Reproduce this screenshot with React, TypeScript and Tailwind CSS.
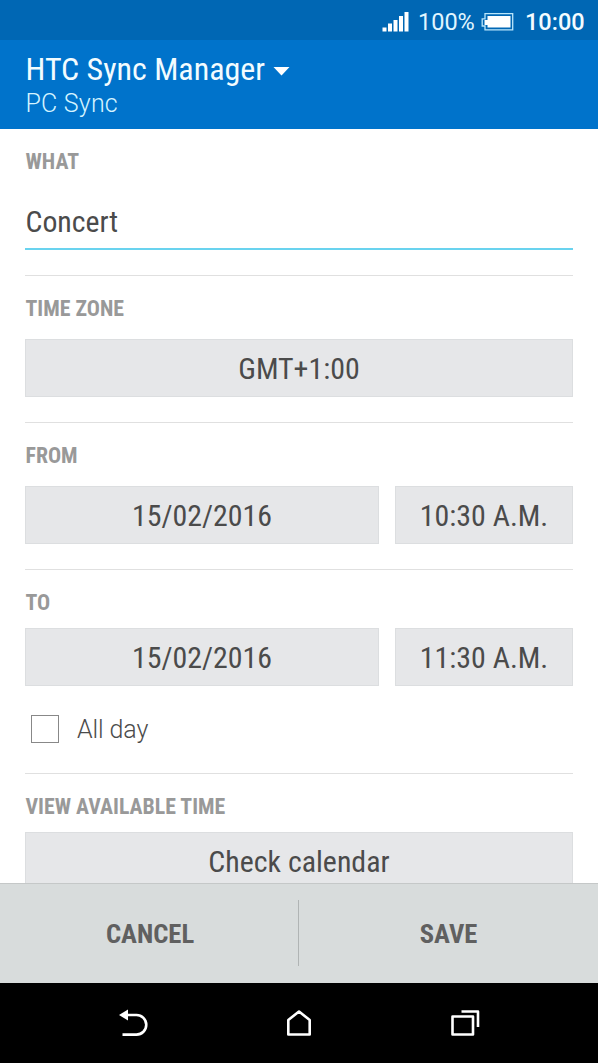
import type { ReactNode } from "react";

function Label({ children }: { children: ReactNode }) {
  return (
    <h2 className="h-6 pl-[0.5px] text-[21.8px] leading-6 font-bold whitespace-nowrap text-[#999999]">{children}</h2>
  );
}

function Field({ children, className = "" }: { children: ReactNode; className?: string }) {
  return (
    <button
      className={`flex h-[57.5px] items-center justify-center border border-[#dcdee0] bg-[#e6e7e9] pt-[2px] text-[29.9px] leading-9 whitespace-nowrap text-[#4b4b4b] ${className}`}
    >
      {children}
    </button>
  );
}

function DateTimeRow({ date, time }: { date: string; time: string }) {
  return (
    <div className="flex gap-4">
      <Field className="w-[354px]">{date}</Field>
      <Field className="flex-1">{time}</Field>
    </div>
  );
}

function StatusBar() {
  return (
    <div className="flex h-10 shrink-0 items-center bg-[#0067b4] pt-1 pl-[382px] text-white">
      <svg className="h-5 w-[27px] shrink-0" viewBox="0 0 27 20" fill="currentColor">
        <path d="M0.5 15.5h4v4h-4zM6 11.500h4v8h-4zM11.500 8h4v11.500h-4zM17 4h4v15.500h-4zM22.500 0h4v19.500h-4z" />
      </svg>
      <span className="ml-[9px] w-[63px] text-[23.5px] leading-8 font-normal whitespace-nowrap text-[#e0f6ff] [font-stretch:100%]">
        100%
      </span>
      <svg className="h-[19px] w-[33px] shrink-0" viewBox="0 0 33 19" fill="none">
        <path d="M4 0.700h27.700v16.100h-27.700v-3.800h-2.800v-7.200h2.800z" stroke="#b9e6fb" strokeWidth="1.300" />
        <path d="M6.500 3h23v11.500h-23v-2.500h-3v-5h3z" fill="white" />
      </svg>
      <span className="ml-[11px] text-[23.5px] leading-8 font-medium whitespace-nowrap text-[#f4fcff] [font-stretch:100%]">
        10:00
      </span>
    </div>
  );
}

function Header() {
  return (
    <header className="h-[89px] shrink-0 bg-[#0073cb] pt-[10px] pl-[25.5px] text-[#f2fcff]">
      <div className="flex h-[38px] items-center">
        <h1 className="text-[32px] leading-[38px] whitespace-nowrap">HTC Sync Manager</h1>
        <svg className="mt-1 ml-2 h-[9px] w-[17px]" viewBox="0 0 17 9" fill="white">
          <path d="M0.500 0h16l-8 8.500z" />
        </svg>
      </div>
      <p className="text-[25px] leading-[31px] font-light tracking-[0.2px] text-[#d5f3ff] [font-stretch:100%]">
        PC Sync
      </p>
    </header>
  );
}

export default function App() {
  return (
    <div className="flex h-[1063px] w-[598px] flex-col overflow-hidden bg-white font-['Roboto','Roboto_Condensed',sans-serif] [font-stretch:75%]">
      <StatusBar />
      <Header />
      <main className="min-h-0 flex-1 overflow-hidden pr-[25px] pl-[25px]">
        <section className="h-[147px] border-b border-[#e0e0e0] pt-[21px]">
          <Label>WHAT</Label>
          <div className="mt-[30px] h-[46px] border-b-2 border-[#69d3ef] pl-[0.5px] text-[29.8px] leading-9 text-[#4b4b4b]">
            Concert
          </div>
        </section>
        <section className="h-[147px] border-b border-[#e0e0e0] pt-[21px]">
          <Label>TIME ZONE</Label>
          <Field className="mt-[18px] w-full">GMT+1:00</Field>
        </section>
        <section className="h-[147px] border-b border-[#e0e0e0] pt-[21px]">
          <Label>FROM</Label>
          <div className="mt-[18px]">
            <DateTimeRow date="15/02/2016" time="10:30 A.M." />
          </div>
        </section>
        <section className="h-[204px] border-b border-[#e0e0e0] pt-[21px]">
          <Label>TO</Label>
          <div className="mt-[13px]">
            <DateTimeRow date="15/02/2016" time="11:30 A.M." />
          </div>
          <label className="mt-[29.5px] flex items-start pl-[6px]">
            <span className="h-7 w-7 border border-[#888888]" />
            <span className="ml-[18px] pt-[1px] text-[25px] leading-7 font-light tracking-[-0.1px] text-[#4b4b4b] [font-stretch:100%]">
              All day
            </span>
          </label>
        </section>
        <section className="pt-[21px]">
          <Label>VIEW AVAILABLE TIME</Label>
          <Field className="mt-[13px] w-full">Check calendar</Field>
        </section>
      </main>
      <footer className="flex h-[100px] shrink-0 items-center border-t border-[#c5c8c8] bg-[#d8dcdc] text-[26.6px] leading-8 font-bold text-[#606060]">
        <button className="h-full w-[298px] pt-px pl-[2px]">CANCEL</button>
        <div className="mb-px h-[66px] w-px bg-[#b0b4b4]" />
        <button className="h-full flex-1 pt-px">SAVE</button>
      </footer>
      <nav className="flex h-20 shrink-0 items-center bg-black">
        <svg className="h-20 w-full" viewBox="0 983 598 80" fill="none" stroke="white" strokeWidth="2.600">
          <path d="M127 1015h9.500a9.800 9.800 0 0 1 0 19.600h-14" />
          <path d="M119 1015l9-5.500v11z" fill="white" stroke="none" />
          <path d="M288.300 1034.500v-14.500l10.700-8.500 10.700 8.500v14.500z" strokeLinejoin="round" />
          <path d="M452.500 1016.500h20.500v18h-20.500zM461.500 1011.500h16.500v15.500" strokeLinejoin="round" />
        </svg>
      </nav>
    </div>
  );
}
